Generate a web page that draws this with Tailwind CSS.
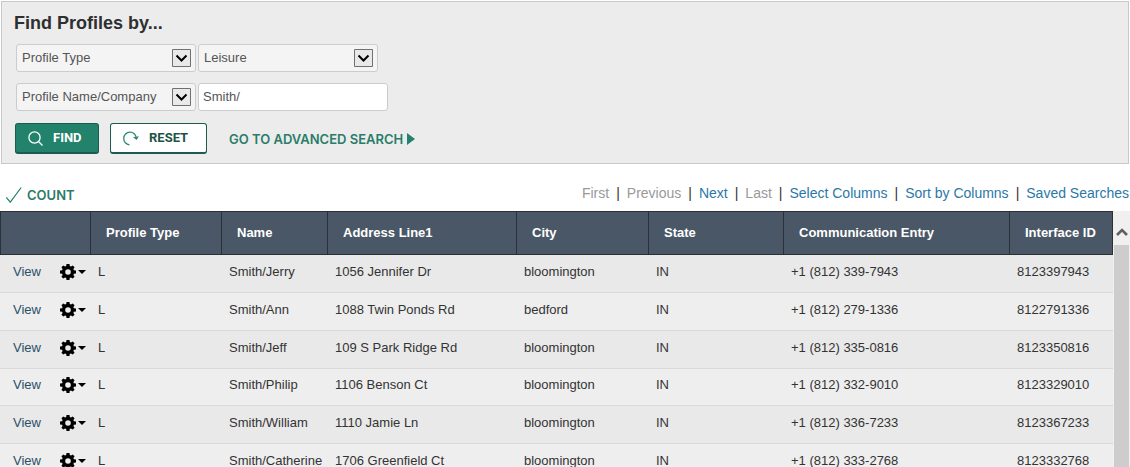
<!DOCTYPE html>
<html lang="en">
<head>
<meta charset="utf-8">
<title>Find Profiles</title>
<script src="https://cdn.jsdelivr.net/npm/@tailwindcss/browser@4"></script>
</head>
<body class="h-screen overflow-hidden flex flex-col bg-white font-['Liberation_Sans',Arial,sans-serif] text-[13px] leading-4 text-[#333]">

<svg class="hidden">
  <symbol id="gear" viewBox="0 0 16 16">
    <path fill="currentColor" fill-rule="evenodd" d="M6.500 0h3l.3 2.100 1.200.5L12.700 1.400l1.900 1.900-1.200 1.800.5 1.200 2.100.3v2.800l-2.100.3-.5 1.200 1.200 1.800-1.900 1.900-1.800-1.200-1.200.5-.2 2.100h-3l-.3-2.100-1.200-.5-1.700 1.200-1.900-1.900 1.200-1.800-.5-1.200L0 9.400V6.600l2.100-.3.5-1.200L1.400 3.300l1.900-1.900L5 2.600l1.200-.5zM8 5.200a2.800 2.800 0 1 0 0 5.600 2.800 2.800 0 0 0 0-5.600z"/>
  </symbol>
  <symbol id="drop" viewBox="0 0 19 18">
    <path fill="#e9e9e9" stroke="#707070" d="M.5.5h18v17H.5z"/>
    <path fill="none" stroke="#000" stroke-width="2" d="M4.500 6.500 9.500 11.500 14.500 6.500"/>
  </symbol>
</svg>

<form class="m-px border border-[#c8c8c8] bg-[#ececec] pl-3 pt-[11px] pb-[9px] shrink-0" onsubmit="return false">
  <h1 class="text-lg leading-5 font-bold text-[#2d2f31]">Find Profiles by...</h1>
  <div class="mt-[11px] ml-0.5 flex gap-0.5">
    <span class="relative">
      <select aria-label="First criterion" class="block appearance-none w-[180px] h-7 rounded-[3px] border border-[#ccc] bg-[#f4f4f4] pl-[5px] text-[#555]"><option>Profile Type</option></select>
      <svg class="absolute right-[5px] top-[5px] w-[19px] h-[18px] pointer-events-none"><use href="#drop"/></svg>
    </span>
    <span class="relative">
      <select aria-label="Profile type value" class="block appearance-none w-[180px] h-7 rounded-[3px] border border-[#ccc] bg-[#f4f4f4] pl-[5px] text-[#555]"><option>Leisure</option></select>
      <svg class="absolute right-[5px] top-[5px] w-[19px] h-[18px] pointer-events-none"><use href="#drop"/></svg>
    </span>
  </div>
  <div class="mt-[11px] ml-0.5 flex gap-0.5">
    <span class="relative">
      <select aria-label="Second criterion" class="block appearance-none w-[180px] h-7 rounded-[3px] border border-[#ccc] bg-[#f4f4f4] pl-[5px] text-[#555]"><option>Profile Name/Company</option></select>
      <svg class="absolute right-[5px] top-[5px] w-[19px] h-[18px] pointer-events-none"><use href="#drop"/></svg>
    </span>
    <input type="text" aria-label="Profile name or company" value="Smith/" class="w-[190px] h-7 rounded-[3px] border border-[#ccc] bg-white px-1 pb-0.5 text-[#555]">
  </div>
  <div class="mt-3 ml-px flex items-center font-[Roboto,sans-serif] font-bold">
    <button class="w-[84px] h-[31px] flex items-center pl-3 gap-[10px] rounded-[3px] border border-b-2 border-[#1c5b4e] bg-[#23826c] text-white">
      <svg class="size-[15px]" viewBox="0 0 15 15" fill="none" stroke="currentColor" stroke-width="1.300"><circle cx="6.500" cy="6.500" r="5.600"/><path d="m10.500 10.500 4 4"/></svg>FIND
    </button>
    <button class="ml-[11px] w-[97px] h-[31px] flex items-center pl-3 gap-[10px] rounded-[3px] border border-b-2 border-[#1c5b4e] bg-white text-[#1d5347]">
      <svg class="w-4 h-[15px]" viewBox="0 0 16 15" fill="none" stroke="#2a8a73" stroke-width="1.300"><path d="M6.500 13.800A6.300 6.300 0 1 1 13.300 7"/><path fill="#2a8a73" stroke="none" d="M10 6.300 15.800 5.300 13.700 8.900z"/></svg>RESET
    </button>
    <a href="#" class="ml-[22px] flex items-center gap-1 font-[Inter,sans-serif] font-semibold text-[#2b7c69]">GO TO ADVANCED SEARCH
      <svg class="w-2 h-3" viewBox="0 0 8 12"><path fill="#23826c" d="M0 0 8 6 0 12z"/></svg>
    </a>
  </div>
</form>

<div class="h-[46px] shrink-0 flex justify-between pl-1.5 pr-px pt-5">
  <button class="h-5 flex items-center gap-[5px] font-[Inter,sans-serif] font-semibold text-[#2b7c69]">
    <svg class="size-4" viewBox="0 0 16 16" fill="none" stroke="#23826c" stroke-width="1.200"><path d="m.3 10.500 4 4.700L15.200.5"/></svg>COUNT
  </button>
  <nav class="flex gap-[7px] text-sm leading-4 text-[#2a78a8] whitespace-nowrap">
    <span class="text-[#999]">First</span><span class="text-[#333]">|</span>
    <span class="text-[#999]">Previous</span><span class="text-[#333]">|</span>
    <a href="#">Next</a><span class="text-[#333]">|</span>
    <span class="text-[#999]">Last</span><span class="text-[#333]">|</span>
    <a href="#">Select Columns</a><span class="text-[#333]">|</span>
    <a href="#">Sort by Columns</a><span class="text-[#333]">|</span>
    <a href="#">Saved Searches</a>
  </nav>
</div>

<main class="flex-1 min-h-0 flex overflow-hidden">
  <div class="flex-1 min-w-0">
    <table class="w-full table-fixed border-separate border-spacing-0 text-left whitespace-nowrap">
      <colgroup><col class="w-[90px]"><col class="w-[131px]"><col class="w-[106px]"><col class="w-[189px]"><col class="w-[132px]"><col class="w-[135px]"><col class="w-[226px]"><col class="w-[104px]"></colgroup>
      <thead>
        <tr class="h-11 bg-[#4a5766] text-white [&>th]:border-l [&>th]:border-y [&>th]:border-[#2b3036] [&>th]:pl-[15px] [&>th]:font-bold">
          <th aria-label="Actions"></th><th>Profile Type</th><th>Name</th><th>Address Line1</th><th>City</th><th>State</th><th>Communication Entry</th><th class="border-r">Interface ID</th>
        </tr>
      </thead>
      <tbody id="rows"></tbody>
    </table>
  </div>
  <div class="w-[17px] shrink-0 flex flex-col bg-[#f0f0f0] px-px">
    <div class="h-[34px] flex items-center justify-center"><svg class="w-3 h-2 mt-2" viewBox="0 0 12 8" fill="none" stroke="#606060" stroke-width="2.600"><path d="m1 7 5-5 5 5"/></svg></div>
    <div class="flex-1 bg-[#cdcdcd]"></div>
  </div>
</main>

<script>
const data = [
  ["Smith/Jerry", "1056 Jennifer Dr", "bloomington", "+1 (812) 339-7943", "8123397943"],
  ["Smith/Ann", "1088 Twin Ponds Rd", "bedford", "+1 (812) 279-1336", "8122791336"],
  ["Smith/Jeff", "109 S Park Ridge Rd", "bloomington", "+1 (812) 335-0816", "8123350816"],
  ["Smith/Philip", "1106 Benson Ct", "bloomington", "+1 (812) 332-9010", "8123329010"],
  ["Smith/William", "1110 Jamie Ln", "bloomington", "+1 (812) 336-7233", "8123367233"],
  ["Smith/Catherine", "1706 Greenfield Ct", "bloomington", "+1 (812) 333-2768", "8123332768"]
];
document.getElementById("rows").innerHTML = data.map(([name, address, city, phone, id]) => `
  <tr class="h-[38px] nth-[4n]:h-[37px] odd:bg-[#e9e9e9] even:bg-[#eee] [&>td]:border-b [&>td]:border-[#d9d9d9] [&>td]:pl-2 [&>td]:pb-1">
    <td><div class="flex items-center pl-[5px]"><a href="#" class="w-[47px] text-[#2c4f66]">View</a><button aria-label="Actions for ${name}" class="flex items-center gap-0.5 text-black"><svg class="size-4"><use href="#gear"/></svg><svg class="w-2 h-1" viewBox="0 0 8 4"><path d="M0 0h8L4 4z"/></svg></button></div></td>
    <td>L</td><td>${name}</td><td>${address}</td><td>${city}</td><td>IN</td><td>${phone}</td><td>${id}</td>
  </tr>`).join("");
</script>
</body>
</html>
